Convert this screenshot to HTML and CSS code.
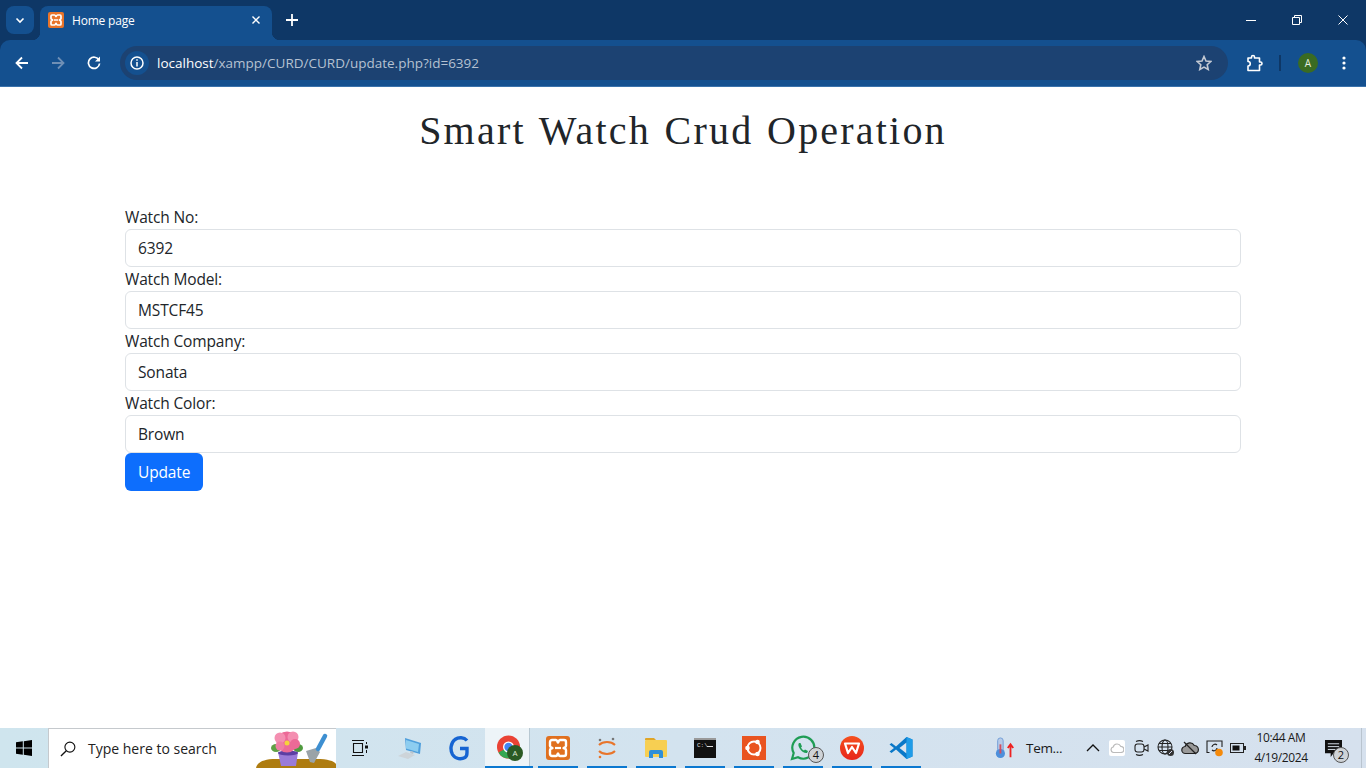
FILE: index.html
```html
<!DOCTYPE html>
<html lang="en">
<head>
    <meta charset="UTF-8">
    <meta name="viewport" content="width=device-width, initial-scale=1.0">
    <title>Home page</title>
    <link rel="stylesheet" href="styles.css">
</head>
<body>

    <header class="browser">
        <div class="tabstrip">
            <div class="tab-search">
                <svg width="12" height="12" viewBox="0 0 12 12"><path d="M2.500 4.500 6 8l3.500-3.500" fill="none" stroke="#fff" stroke-width="1.600"/></svg>
            </div>
            <div class="tab">
                <svg class="favicon" width="16" height="16" viewBox="0 0 16 16"><rect width="16" height="16" rx="2" fill="#e8742a"/><path d="M4 3h2.500c1 0 1 1.600 1.500 1.600S8.500 3 9.500 3H12a1 1 0 0 1 1 1v2.500c0 1-1.600 1-1.600 1.500s1.600.5 1.600 1.500V12a1 1 0 0 1-1 1H9.500c-1 0-1-1.600-1.500-1.600S7.500 13 6.500 13H4a1 1 0 0 1-1-1V9.500c0-1 1.600-1 1.600-1.500S3 7.500 3 6.500V4a1 1 0 0 1 1-1z" fill="none" stroke="#fff" stroke-width="1.700"/><path d="M6 8h4" stroke="#fff" stroke-width="1.500"/></svg>
                <span class="tab-title">Home page</span>
                <svg class="tab-close" width="8" height="8" viewBox="0 0 8 8"><path d="M.5.500l7 7M7.500.500l-7 7" stroke="#fff" stroke-width="1.400"/></svg>
            </div>
            <svg class="new-tab" width="12" height="12" viewBox="0 0 12 12"><path d="M6 0v12M0 6h12" stroke="#fff" stroke-width="1.800"/></svg>
            <div class="window-controls">
                <svg width="10" height="10" viewBox="0 0 10 10"><path d="M0 5.500h10" stroke="#fff"/></svg>
                <svg width="10" height="10" viewBox="0 0 10 10"><path d="M.5 2.500h7v7h-7zM2.500 2.500v-2h7v7h-2" fill="none" stroke="#fff"/></svg>
                <svg width="10" height="10" viewBox="0 0 10 10"><path d="M.5.500l9 9M9.500.500l-9 9" stroke="#fff"/></svg>
            </div>
        </div>
        <div class="toolbar">
            <svg class="nav-icon" width="14" height="14" viewBox="0 0 14 14"><path d="M13 7H2M7 1.500 1.500 7 7 12.500" fill="none" stroke="#fff" stroke-width="1.800"/></svg>
            <svg class="nav-icon dim" width="14" height="14" viewBox="0 0 14 14"><path d="M1 7h11M7 1.500 12.500 7 7 12.500" fill="none" stroke="#6f8fb5" stroke-width="1.800"/></svg>
            <svg class="nav-icon" width="14" height="14" viewBox="0 0 14 14"><path d="M12 4.200A5.600 5.600 0 1 0 12.600 7.500" fill="none" stroke="#fff" stroke-width="1.700"/><path d="M13 0.500v5H8z" fill="#fff"/></svg>
            <div class="omnibox">
                <div class="site-info">
                    <svg width="14" height="14" viewBox="0 0 14 14"><circle cx="7" cy="7" r="6" fill="none" stroke="#fff" stroke-width="1.500"/><path d="M7 6v4.500M7 3.300v1.500" stroke="#fff" stroke-width="1.500"/></svg>
                </div>
                <div class="url"><span class="url-host">localhost</span>/xampp/CURD/CURD/update.php?id=6392</div>
                <svg class="star" width="16" height="16" viewBox="0 0 16 16"><path d="M8 1.500l2 4.500 4.800.5-3.600 3.200 1 4.800L8 12.100l-4.200 2.400 1-4.800L1.200 6.500 6 6z" fill="none" stroke="#c3c9d3" stroke-width="1.600"/></svg>
            </div>
            <svg class="ext-icon" width="18" height="18" viewBox="0 0 18 18"><path d="M3 4h3.500V3a1.500 1.500 0 0 1 3 0v1H14.500v4h1a1.500 1.500 0 0 1 0 3h-1v5.500H3V12a2 2 0 0 0 0-4.500z" fill="none" stroke="#fff" stroke-width="1.600" stroke-linejoin="round"/></svg>
            <span class="toolbar-sep"></span>
            <span class="avatar">A</span>
            <svg class="menu-dots" width="4" height="14" viewBox="0 0 4 14"><circle cx="2" cy="2" r="1.600" fill="#fff"/><circle cx="2" cy="7" r="1.600" fill="#fff"/><circle cx="2" cy="12" r="1.600" fill="#fff"/></svg>
        </div>
    </header>

    <main class="page">
        <h1 class="page-title">Smart Watch Crud Operation</h1>
        <form class="watch-form">
            <label for="no">Watch No:</label>
            <input id="no" type="text" value="6392">
            <label for="model">Watch Model:</label>
            <input id="model" type="text" value="MSTCF45">
            <label for="company">Watch Company:</label>
            <input id="company" type="text" value="Sonata">
            <label for="color">Watch Color:</label>
            <input id="color" type="text" value="Brown">
            <button class="btn-update" type="button">Update</button>
        </form>
    </main>

    <footer class="taskbar">
        <div class="start">
            <svg width="16" height="16" viewBox="0 0 16 16"><path d="M0 2.300 6.800 1.300v6.200H0zM7.800 1.200 16 0v7.500H7.800zM0 8.500h6.800v6.200L0 13.700zM7.800 8.500H16V16l-8.200-1.200z" fill="#000"/></svg>
        </div>
        <div class="search-box">
            <svg class="search-icon" width="16" height="16" viewBox="0 0 17 17"><circle cx="10.500" cy="6.500" r="5.300" fill="none" stroke="#111" stroke-width="1.200"/><path d="M6.700 10.300 1 16" stroke="#111" stroke-width="1.400"/></svg>
            <span class="search-text">Type here to search</span>
            <svg class="search-art" width="80" height="39" viewBox="0 0 80 39">
                <path d="M0 39c1-5 6-9 20-9h40c12 0 18 2 20 5v4z" fill="#ae7c10"/>
                <path d="M50 22l10-3 4 4-6 11-4-1z" fill="#9aa3a8"/>
                <path d="M62 20 69 7" stroke="#3d8fd1" stroke-width="4.500" stroke-linecap="round"/>
                <ellipse cx="20" cy="19" rx="5" ry="4" fill="#5fa045"/>
                <ellipse cx="42" cy="19" rx="5" ry="4" fill="#4f9a3e"/>
                <path d="M22 23h20l-2 14H25z" fill="#9a7bd8"/>
                <ellipse cx="32" cy="24" rx="10" ry="2.500" fill="#5c3fa3"/>
                <circle cx="31" cy="13" r="10.500" fill="#ec6a97"/>
                <circle cx="24" cy="9" r="5.500" fill="#f48fb1"/>
                <circle cx="37" cy="8" r="5.500" fill="#f48fb1"/>
                <circle cx="39" cy="15" r="5" fill="#ec6a97"/>
                <circle cx="24" cy="17" r="4.500" fill="#f07da4"/>
                <circle cx="31" cy="14" r="2.500" fill="#f5d23c"/>
            </svg>
        </div>
        <div class="task-icon">
            <svg width="16" height="16" viewBox="0 0 16 16"><path d="M0 .5h12M0 15.500h12M1.500 3.500h9v9h-9z" fill="none" stroke="#111" stroke-width="1.100"/><rect x="13" y="5.500" width="3" height="3" fill="#111"/><path d="M14.500 2v2M14.500 10v3" stroke="#111"/></svg>
        </div>
        <div class="pinned">
            <div class="app computer">
                <svg width="24" height="21" viewBox="0 0 24 21"><path d="M7 0l16 5-1 11-14-4z" fill="#4f9fdc"/><path d="M8 2l13 4-1 8-12-3.500z" fill="#8dcdf0"/><path d="M13 13l3 1-1 2-3-1z" fill="#b9c4cc"/><path d="M0 18l8-4 9 3-7 4z" fill="#cdd4d9"/></svg>
            </div>
            <div class="app">
                <svg width="20" height="25" viewBox="0 0 20 25"><path d="M18 4.500C15 1 9.500 1 6 3.500 1.500 7 1 14 3.500 18.500c3 5 9 5 12.500 3 1.500-1 2-3 2-5v-4h-7" fill="none" stroke="#1664d2" stroke-width="3.400"/></svg>
            </div>
            <div class="app active">
                <svg width="26" height="26" viewBox="0 0 26 26">
                    <circle cx="11.500" cy="12" r="11.500" fill="#ea4335"/>
                    <path d="M11.500 12 1.500 17.500A11.500 11.500 0 0 0 11.500 23.500c1.500 0 3-.3 4-1z" fill="#34a853"/>
                    <path d="M11.500 12H23a11.500 11.500 0 0 1-6 10.500z" fill="#fbbc05"/>
                    <circle cx="11.500" cy="12" r="5.500" fill="#fff"/>
                    <circle cx="11.500" cy="12" r="4.200" fill="#4285f4"/>
                    <circle cx="18" cy="18" r="8" fill="#2b5a24"/>
                    <text x="18" y="21" class="badge-a" text-anchor="middle">A</text>
                </svg>
            </div>
            <span class="pin-sep"></span>
            <div class="app running">
                <svg width="24" height="24" viewBox="0 0 24 24"><rect width="24" height="24" rx="3" fill="#e0701f"/><path d="M6 4h4c1.500 0 1.500 2.500 2 2.500S12.500 4 14 4h4a2 2 0 0 1 2 2v4c0 1.500-2.500 1.500-2.500 2s2.500.5 2.500 2v4a2 2 0 0 1-2 2h-4c-1.500 0-1.500-2.500-2-2.500s-.5 2.500-2 2.500H6a2 2 0 0 1-2-2v-4c0-1.500 2.500-1.500 2.500-2S4 11.500 4 10V6a2 2 0 0 1 2-2z" fill="none" stroke="#fff" stroke-width="2.400"/><path d="M9 12h6" stroke="#fff" stroke-width="2.200"/></svg>
            </div>
            <div class="app running">
                <svg width="18" height="22" viewBox="0 0 18 22"><path d="M1 8c4-4 12-4 16 0M1 14c4 4 12 4 16 0" fill="none" stroke="#e8752b" stroke-width="2"/><circle cx="2" cy="3" r="1.300" fill="#777"/><circle cx="15" cy="2" r="1.300" fill="#777"/><circle cx="2" cy="20" r="1.300" fill="#e8752b"/></svg>
            </div>
            <div class="app running">
                <svg width="22" height="22" viewBox="0 0 22 22"><path d="M0 2a1 1 0 0 1 1-1h8l2 2H0z" fill="#e0a526"/><rect y="3" width="22" height="17" rx="1" fill="#f7cf52"/><path d="M4 21v-6a2 2 0 0 1 2-2h10a2 2 0 0 1 2 2v6h-4v-4H8v4z" fill="#2f8fd8"/></svg>
            </div>
            <div class="app running">
                <svg width="22" height="20" viewBox="0 0 22 20"><rect width="22" height="20" fill="#111"/><rect width="22" height="2" fill="#999"/><text x="3" y="9" class="cmd-text">C:\</text><path d="M13 8.500h6" stroke="#ddd"/></svg>
            </div>
            <div class="app running">
                <svg width="24" height="24" viewBox="0 0 24 24"><rect width="24" height="24" fill="#e95420"/><circle cx="12" cy="12" r="6.500" fill="none" stroke="#fff" stroke-width="2"/><circle cx="5.500" cy="12" r="2.300" fill="#fff"/><circle cx="15.500" cy="6" r="2.300" fill="#fff"/><circle cx="15.500" cy="18" r="2.300" fill="#fff"/></svg>
            </div>
            <div class="app running">
                <svg width="26" height="26" viewBox="0 0 26 26"><path d="M2 24l1.700-6A11 11 0 1 1 8 22.300z" fill="none" stroke="#1f9d55" stroke-width="2.200"/><path d="M9 8c-1 1-1 3 1 6s5 4.500 7 4l1-2-3-1.500-1 1c-1.500-.5-2.500-2-3-3l1-1L10.500 8z" fill="#1f9d55"/></svg>
                <span class="count-badge">4</span>
            </div>
            <div class="app running">
                <svg width="24" height="24" viewBox="0 0 24 24"><defs><linearGradient id="wps" x1="0" y1="0" x2="0" y2="1"><stop offset="0" stop-color="#f5501e"/><stop offset="1" stop-color="#e7261b"/></linearGradient></defs><circle cx="12" cy="12" r="12" fill="url(#wps)"/><path d="M5 7.500h14l-3 9.500-4-6-4 6z" fill="none" stroke="#fff" stroke-width="2.200" stroke-linejoin="round"/></svg>
            </div>
            <div class="app running">
                <svg width="24" height="24" viewBox="0 0 24 24"><path d="M17.500 1 23.500 3.500v17L17.500 23 7 13.500 2.500 17 .5 15.500 5 12 .5 8.500 2.500 7 7 10.500z" fill="#0a78c8"/><path d="M17.500 6.500 10.500 12l7 5.500z" fill="#dbe4ef"/><path d="M17.500 1 23.500 3.500v17L17.500 23z" fill="#1f9ce8"/></svg>
            </div>
        </div>
        <div class="tray">
            <div class="weather">
                <svg width="22" height="22" viewBox="0 0 22 24"><rect x="3" y="1" width="6" height="16" rx="3" fill="#b7cbe8" stroke="#6f9bd6"/><circle cx="6" cy="18" r="5" fill="#4d8fdb"/><path d="M6 8v10" stroke="#d34d5f" stroke-width="2"/><path d="M17 22V9M14 12l3-4 3 4" fill="none" stroke="#e22" stroke-width="2"/></svg>
                <span class="weather-text">Tem...</span>
            </div>
            <svg class="tray-caret" width="14" height="8" viewBox="0 0 14 8"><path d="M1 7l6-6 6 6" fill="none" stroke="#111" stroke-width="1.300"/></svg>
            <div class="tray-icons">
                <span class="cloud-tile">
                    <svg width="14" height="10" viewBox="0 0 14 10"><path d="M3.500 9.500a2.800 2.800 0 0 1-.3-5.500 4 4 0 0 1 7.500-.7 3.100 3.100 0 0 1 0 6.200z" fill="none" stroke="#bbb" stroke-width="1.200"/></svg>
                </span>
                <svg width="16" height="18" viewBox="0 0 16 18"><rect x="1" y="5" width="9" height="8" rx="2.500" fill="none" stroke="#222" stroke-width="1.100"/><path d="M10 8l4-2v6l-4-2M2 2.500c2-1 5-1 7 0M2 15.500c2 1 5 1 7 0" fill="none" stroke="#222" stroke-width="1.100"/></svg>
                <svg width="18" height="18" viewBox="0 0 18 18"><circle cx="8" cy="8" r="7" fill="none" stroke="#222" stroke-width="1.100"/><ellipse cx="8" cy="8" rx="3" ry="7" fill="none" stroke="#222" stroke-width="1.100"/><path d="M1 8h14M2 4.500h12M2 11.500h12" stroke="#222" stroke-width="1"/><circle cx="13.500" cy="13.500" r="3.500" fill="#333"/><path d="M12 15l3-3" stroke="#dde" stroke-width="1"/></svg>
                <svg width="18" height="14" viewBox="0 0 18 14"><path d="M4.500 12.500a3.500 3.500 0 0 1-.4-7 5 5 0 0 1 9.200-1 3.900 3.900 0 0 1 .2 8z" fill="#999" stroke="#222" stroke-width="1.200"/><path d="M3 1l12 12" stroke="#222" stroke-width="1.300"/></svg>
                <svg width="18" height="18" viewBox="0 0 18 18"><path d="M3.500 13.500H1V2h15v6" fill="none" stroke="#222" stroke-width="1.100"/><path d="M6 8a3 3 0 0 1 5-2M11 9a3 3 0 0 1-5 2" fill="none" stroke="#222" stroke-width="1.200"/><circle cx="13" cy="13.500" r="3.800" fill="#f58a0b"/></svg>
                <svg width="16" height="10" viewBox="0 0 16 10"><rect x=".5" y=".5" width="13" height="9" fill="none" stroke="#222"/><rect x="2.500" y="2.500" width="7" height="5" fill="#111"/><rect x="14" y="3" width="2" height="4" fill="#222"/></svg>
            </div>
            <div class="clock">
                <span>10:44 AM</span>
                <span>4/19/2024</span>
            </div>
            <div class="notify">
                <svg width="17" height="17" viewBox="0 0 18 18"><path d="M0 0h18v14H9l-3 4v-4H0z" fill="#111"/><path d="M3 4h12M3 7h12M3 10h8" stroke="#dce4ee" stroke-width="1"/></svg>
                <span class="count-badge">2</span>
            </div>
            <span class="show-desktop"></span>
        </div>
    </footer>

</body>
</html>
```

FILE: styles.css
```css
* {
    margin: 0;
    padding: 0;
    box-sizing: border-box;
}

body {
    font-family: "Open Sans", "Noto Sans", Arial, sans-serif;
    background-color: #fff;
    color: #212529;
    display: flex;
    flex-direction: column;
    height: 100vh;
    overflow: hidden;
}

/* browser chrome */
.browser {
    background-color: #0e3766;
    flex: none;
}

.tabstrip {
    display: flex;
    align-items: flex-start;
    height: 40px;
    padding: 6px 0 0 6px;
}

.tab-search {
    width: 28px;
    height: 28px;
    border-radius: 8px;
    background-color: #14508f;
    display: flex;
    align-items: center;
    justify-content: center;
}

.tab {
    position: relative;
    display: flex;
    align-items: center;
    width: 232px;
    height: 34px;
    margin-left: 6px;
    padding: 0 12px 6px 8px;
    background-color: #14508f;
    border-radius: 8px 8px 0 0;
    color: #fff;
}

.tab::before,
.tab::after {
    content: "";
    position: absolute;
    bottom: 0;
    width: 8px;
    height: 8px;
}

.tab::before {
    left: -8px;
    background: radial-gradient(circle at 0 0, transparent 8px, #14508f 8.5px);
}

.tab::after {
    right: -8px;
    background: radial-gradient(circle at 100% 0, transparent 8px, #14508f 8.5px);
}

.favicon {
    flex: none;
}

.tab-title {
    flex: 1;
    margin-left: 8px;
    font-size: 12px;
    letter-spacing: -0.2px;
}

.new-tab {
    margin: 8px 0 0 14px;
}

.window-controls {
    margin-left: auto;
    display: flex;
    align-items: center;
    gap: 36px;
    padding: 9px 18px 0 0;
}

.toolbar {
    display: flex;
    align-items: center;
    height: 47px;
    padding: 0 14px 1px 15px;
    background-color: #14508f;
    border-radius: 10px 10px 0 0;
    border-bottom: 1px solid #3a72ab;
}

.nav-icon {
    flex: none;
    margin-right: 22px;
}

.omnibox {
    display: flex;
    align-items: center;
    width: 1108px;
    height: 34px;
    margin-left: -3px;
    padding: 0 16px 0 5px;
    border-radius: 17px;
    background-color: #1c4272;
}

.site-info {
    width: 24px;
    height: 24px;
    border-radius: 50%;
    background-color: #14508f;
    display: flex;
    align-items: center;
    justify-content: center;
}

.url {
    flex: 1;
    margin-left: 8px;
    font-size: 13.5px;
    color: #b5c1d1;
}

.url-host {
    color: #fff;
}

.ext-icon {
    margin-left: 17px;
}

.toolbar-sep {
    width: 2px;
    height: 16px;
    margin-left: 16px;
    background-color: #0e3766;
}

.avatar {
    width: 20px;
    height: 20px;
    margin-left: 17px;
    border-radius: 50%;
    background-color: #3a6b22;
    color: #e6eee0;
    font-size: 10px;
    text-align: center;
    line-height: 20px;
}

.menu-dots {
    margin-left: 24px;
}

/* page */
.page {
    flex: 1;
    padding: 0 125px;
}

.page-title {
    margin-top: 18px;
    font-family: "Liberation Serif", serif;
    font-size: 40px;
    font-weight: 400;
    line-height: 52px;
    letter-spacing: 2.2px;
    word-spacing: 1.5px;
    text-align: center;
}

.watch-form {
    margin-top: 48px;
    font-size: 15.5px;
    line-height: 24px;
    letter-spacing: -0.15px;
}

.watch-form label {
    display: block;
}

.watch-form input {
    display: block;
    width: 100%;
    height: 38px;
    padding: 6px 12px;
    border: 1px solid #dee2e6;
    border-radius: 6px;
    color: #212529;
    font: inherit;
    letter-spacing: inherit;
}

.btn-update {
    display: block;
    height: 38px;
    padding: 6px 13px;
    border: none;
    border-radius: 6px;
    background-color: #0d6efd;
    color: #fff;
    font: inherit;
    letter-spacing: inherit;
}

/* windows taskbar */
.taskbar {
    flex: none;
    display: flex;
    align-items: center;
    height: 40px;
    background: linear-gradient(90deg, #cfe5ee 0%, #d3e3ef 50%, #d6e1ee 100%);
    font-size: 13px;
    color: #1a1a1a;
}

.start {
    width: 48px;
    display: flex;
    justify-content: center;
}

.search-box {
    display: flex;
    align-items: center;
    width: 288px;
    height: 40px;
    padding-left: 11px;
    background-color: #fff;
    border: 1px solid #c5c9cd;
    border-bottom: none;
    border-right: none;
}

.search-icon {
    flex: none;
}

.search-text {
    margin-left: 12px;
    font-size: 14px;
    color: #222;
}

.search-art {
    margin-left: auto;
    flex: none;
}

.task-icon {
    width: 48px;
    display: flex;
    justify-content: center;
}

.pinned {
    display: flex;
    height: 40px;
    margin-left: 4px;
}

.app {
    position: relative;
    width: 40px;
    height: 40px;
    margin-right: 9px;
    display: flex;
    align-items: center;
    justify-content: center;
}

.app.computer {
    margin-left: 2px;
}

.app.running {
    border-bottom: 2px solid #0b78d0;
    padding-top: 2px;
}

.app.active {
    width: 44px;
    margin: 0 0 0 -3px;
    padding-left: 6px;
    background-color: #edf4f8;
}

.app.active::after {
    content: "";
    position: absolute;
    left: 0;
    bottom: 0;
    width: 48px;
    height: 2px;
    background-color: #0b78d0;
}

.pin-sep {
    width: 1px;
    height: 40px;
    margin-right: 8px;
    background-color: #b8c8d2;
}

.badge-a {
    font-family: "Open Sans", sans-serif;
    font-size: 8px;
    fill: #dfe8da;
}

.cmd-text {
    font-family: "Liberation Mono", monospace;
    font-size: 6px;
    fill: #ddd;
}

.count-badge {
    position: absolute;
    right: -1px;
    bottom: 3px;
    width: 16px;
    height: 16px;
    border-radius: 50%;
    background-color: #cfd3d7;
    border: 1px solid #555;
    color: #111;
    font-size: 11px;
    line-height: 14px;
    text-align: center;
}

.tray {
    flex: 1;
    display: flex;
    align-items: center;
    height: 40px;
    margin-left: 64px;
    padding-right: 4px;
}

.weather {
    display: flex;
    align-items: center;
    gap: 10px;
    width: 92px;
}

.weather-text {
    font-size: 13.5px;
    letter-spacing: -0.3px;
}

.tray-icons {
    display: flex;
    align-items: center;
    gap: 6.5px;
    margin-left: 9px;
}

.cloud-tile {
    width: 16px;
    height: 16px;
    margin-right: 2.5px;
    background-color: #fff;
    border-radius: 2px;
    display: flex;
    align-items: center;
    justify-content: center;
}

.clock {
    display: flex;
    flex-direction: column;
    align-items: center;
    width: 50px;
    margin-left: 10px;
    font-size: 12px;
    line-height: 20px;
    letter-spacing: -0.4px;
    white-space: nowrap;
}

.notify {
    position: relative;
    width: 26px;
    height: 26px;
    margin-left: 19px;
    padding-top: 5px;
}

.notify .count-badge {
    right: 2px;
    bottom: -2px;
}

.show-desktop {
    width: 1px;
    height: 40px;
    margin-left: auto;
    background-color: #b9c4cf;
}
```
